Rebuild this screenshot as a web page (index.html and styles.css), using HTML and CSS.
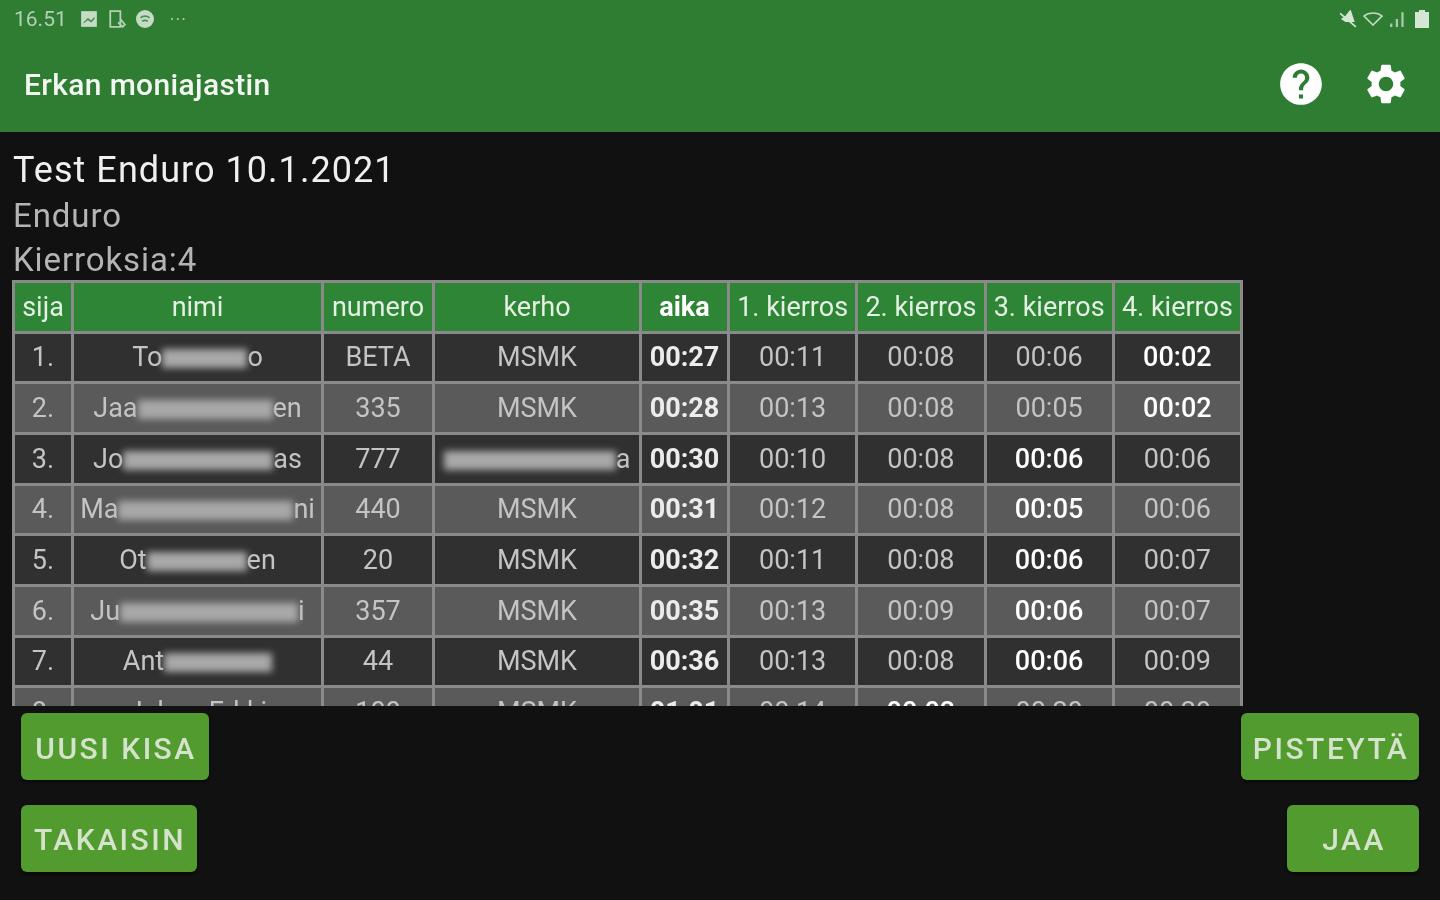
FILE: index.html
```html
<!DOCTYPE html>
<html lang="en">
  <head>
    <meta charset="UTF-8">
    <meta name="viewport" content="width=device-width, initial-scale=1.0">
    <title>Erkan moniajastin</title>
    <link rel="stylesheet" href="styles.css">
  </head>
  <body>
    <div class="screen">
      <header class="topbar">
        <div class="statusbar">
          <div class="status-left">
            <span class="clock">16.51</span>
            <svg class="status-icon" viewBox="0 0 16 16"><path d="M1 1h14v14H1z" fill="#c3dcc3"/><path d="M3 11l4-4 3 2 3-3v2l-3 3-3-2-4 3z" fill="#4f8f52"/></svg>
            <svg class="status-icon" viewBox="0 0 16 16"><path d="M2 1h9v14H2zM11 8l4 5-2 2-4-4" fill="none" stroke="#b5d1b5" stroke-width="1.6"/></svg>
            <svg class="status-icon" viewBox="0 0 16 16"><circle cx="8" cy="8" r="8" fill="#c3dcc3"/><path d="M4 7c2-2 6-2 8 0M5.500 10c1.500-1 3.500-1 5 0" fill="none" stroke="#4f8f52" stroke-width="1.500"/></svg>
            <span class="more">&middot;&middot;&middot;</span>
          </div>
          <div class="status-right">
            <svg class="status-icon" viewBox="0 0 16 16"><path d="M1 3l14 12M3 8l3-2 4-5 3 9H6z" fill="#d5e6d5" stroke="#d5e6d5" stroke-width="1.500"/></svg>
            <svg class="status-wifi" viewBox="0 0 20 14"><path d="M1 4c5-4 13-4 18 0l-9 9z" fill="none" stroke="#c3dcc3" stroke-width="1.600"/></svg>
            <svg class="status-icon" viewBox="0 0 16 16"><path d="M1 15h2v-3H1zM6 15h2V8H6zM11 15h2V2h-2z" fill="#a9cba9"/></svg>
            <svg class="status-battery" viewBox="0 0 14 18"><path d="M4 0h6v2h4v16H0V2h4z" fill="#d5e6d5"/></svg>
          </div>
        </div>
        <div class="appbar">
          <h1 class="app-title">Erkan moniajastin</h1>
          <div class="app-actions">
            <svg class="icon-help" viewBox="0 0 24 24"><path fill="#fff" d="M12 2C6.48 2 2 6.48 2 12s4.48 10 10 10 10-4.48 10-10S17.52 2 12 2zm1 17h-2v-2h2v2zm2.070-7.750l-.9.920C13.450 12.900 13 13.500 13 15h-2v-.5c0-1.100.45-2.100 1.170-2.830l1.240-1.260c.37-.36.59-.86.59-1.410 0-1.100-.9-2-2-2s-2 .9-2 2H8c0-2.210 1.790-4 4-4s4 1.790 4 4c0 .88-.36 1.680-.93 2.250z"/></svg>
            <svg class="icon-gear" viewBox="0 0 24 24"><path fill="#fff" d="M19.140 12.940c.04-.3.06-.61.06-.94 0-.32-.02-.64-.07-.94l2.030-1.580c.18-.14.23-.41.12-.61l-1.920-3.320c-.12-.22-.37-.29-.59-.22l-2.390.96c-.5-.38-1.030-.7-1.620-.94l-.36-2.540c-.04-.24-.24-.41-.48-.41h-3.840c-.24 0-.43.17-.47.41l-.36 2.540c-.59.24-1.130.57-1.620.94l-2.390-.96c-.22-.08-.47 0-.59.22L2.740 8.870c-.12.21-.08.47.12.61l2.030 1.580c-.05.3-.09.63-.09.94s.02.64.07.94l-2.030 1.580c-.18.14-.23.41-.12.61l1.920 3.320c.12.22.37.29.59.22l2.390-.96c.5.38 1.030.7 1.620.94l.36 2.540c.05.24.24.41.48.41h3.840c.24 0 .44-.17.47-.41l.36-2.540c.59-.24 1.130-.56 1.620-.94l2.390.96c.22.08.47 0 .59-.22l1.920-3.320c.12-.22.07-.47-.12-.61l-2.010-1.580zM12 15.600c-1.980 0-3.600-1.620-3.600-3.600s1.620-3.600 3.600-3.600 3.600 1.620 3.600 3.600-1.620 3.600-3.600 3.600z"/></svg>
          </div>
        </div>
      </header>

      <main class="content">
        <h2 class="race-name">Test Enduro 10.1.2021</h2>
        <p class="race-info">Enduro</p>
        <p class="race-info">Kierroksia:4</p>

        <div class="table-wrap">
          <table class="results">
            <colgroup>
              <col class="col-sija"><col class="col-nimi"><col class="col-numero"><col class="col-kerho"><col class="col-aika">
              <col class="col-lap"><col class="col-lap"><col class="col-lap"><col class="col-lap">
            </colgroup>
            <thead>
              <tr>
                <th>sija</th><th>nimi</th><th>numero</th><th>kerho</th><th class="best">aika</th>
                <th>1. kierros</th><th>2. kierros</th><th>3. kierros</th><th>4. kierros</th>
              </tr>
            </thead>
            <tbody>
              <tr>
                <td>1.</td><td>To<span class="smudge w85"></span>o</td><td>BETA</td><td>MSMK</td><td class="total">00:27</td>
                <td>00:11</td><td>00:08</td><td>00:06</td><td class="best">00:02</td>
              </tr>
              <tr>
                <td>2.</td><td>Jaa<span class="smudge w135"></span>en</td><td>335</td><td>MSMK</td><td class="total">00:28</td>
                <td>00:13</td><td>00:08</td><td>00:05</td><td class="best">00:02</td>
              </tr>
              <tr>
                <td>3.</td><td>Jo<span class="smudge w150"></span>as</td><td>777</td><td><span class="smudge w172"></span>a</td><td class="total">00:30</td>
                <td>00:10</td><td>00:08</td><td class="best">00:06</td><td>00:06</td>
              </tr>
              <tr>
                <td>4.</td><td>Ma<span class="smudge w175"></span>ni</td><td>440</td><td>MSMK</td><td class="total">00:31</td>
                <td>00:12</td><td>00:08</td><td class="best">00:05</td><td>00:06</td>
              </tr>
              <tr>
                <td>5.</td><td>Ot<span class="smudge w100"></span>en</td><td>20</td><td>MSMK</td><td class="total">00:32</td>
                <td>00:11</td><td>00:08</td><td class="best">00:06</td><td>00:07</td>
              </tr>
              <tr>
                <td>6.</td><td>Ju<span class="smudge w178"></span>i</td><td>357</td><td>MSMK</td><td class="total">00:35</td>
                <td>00:13</td><td>00:09</td><td class="best">00:06</td><td>00:07</td>
              </tr>
              <tr>
                <td>7.</td><td>Ant<span class="smudge w108"></span></td><td>44</td><td>MSMK</td><td class="total">00:36</td>
                <td>00:13</td><td>00:08</td><td class="best">00:06</td><td>00:09</td>
              </tr>
              <tr>
                <td>8.</td><td>Juhan Erkki</td><td>100</td><td>MSMK</td><td class="total">01:01</td>
                <td>00:14</td><td class="best">00:02</td><td>00:20</td><td>00:20</td>
              </tr>
            </tbody>
          </table>
        </div>

        <div class="button-row">
          <button class="btn btn-new">UUSI KISA</button>
          <button class="btn btn-score">PISTEYTÄ</button>
        </div>
        <div class="button-row second">
          <button class="btn btn-back">TAKAISIN</button>
          <button class="btn btn-share">JAA</button>
        </div>
      </main>
    </div>
  </body>
</html>
```

FILE: styles.css
```css
html, body {
  margin: 0;
  background-color: #111111;
}
body {
  font-family: Roboto, "Liberation Sans", sans-serif;
  overflow: hidden;
}
.screen {
  width: 1440px;
  height: 900px;
  overflow: hidden;
  filter: blur(0.7px);
}

/* top green part */
.topbar {
  height: 132px;
  background-color: #2e7d32;
  box-sizing: border-box;
}
.statusbar {
  height: 38px;
  display: flex;
  justify-content: space-between;
  align-items: center;
  padding: 0 11px 0 14px;
}
.status-left, .status-right {
  display: flex;
  align-items: center;
}
.status-left {
  gap: 10px;
}
.status-right {
  gap: 6px;
}
.clock {
  font-size: 21px;
  color: #b5d1b5;
  margin-right: 3px;
}
.more {
  font-size: 18px;
  color: #a9cba9;
  margin-left: 6px;
  letter-spacing: 1px;
}
.status-icon {
  width: 18px;
  height: 18px;
}
.status-wifi {
  width: 20px;
  height: 14px;
}
.status-battery {
  width: 14px;
  height: 18px;
  margin-left: 2px;
}
.appbar {
  height: 94px;
  display: flex;
  justify-content: space-between;
  align-items: center;
  padding: 0 30px 0 24px;
}
.app-title {
  margin: 0 0 2px 0;
  font-size: 30px;
  font-weight: 500;
  letter-spacing: 0.35px;
  color: #f2f7f2;
}
.app-actions {
  display: flex;
  align-items: center;
  gap: 36px;
  margin-bottom: 2px;
}
.icon-help {
  width: 50px;
  height: 50px;
}
.icon-gear {
  width: 48px;
  height: 48px;
}

/* race info */
.content {
  padding: 15px 0 0 13px;
}
.race-name {
  margin: 0;
  font-size: 36px;
  line-height: 47px;
  font-weight: 400;
  letter-spacing: 1.05px;
  color: #f0f0f0;
}
.race-info {
  margin: 0;
  font-size: 33px;
  line-height: 44px;
  letter-spacing: 0.9px;
  color: #b4b4b4;
}

/* table */
.table-wrap {
  width: 1231px;
  height: 426px;
  margin-left: -1px;
  margin-top: -2px;
  overflow: hidden;
}
.results {
  border-collapse: collapse;
  table-layout: fixed;
  width: 1228px;
  font-size: 27px;
  color: #c4c4c4;
}
.col-sija { width: 59px; }
.col-nimi { width: 250px; }
.col-numero { width: 111px; }
.col-kerho { width: 207px; }
.col-aika { width: 88px; }
.col-lap { width: 128.250px; }
.results th, .results td {
  border: 3px solid #8a8a8a;
  padding: 0;
  height: 50.670px;
  box-sizing: border-box;
  text-align: center;
  white-space: nowrap;
  overflow: hidden;
}
.results th {
  background-color: #2e8535;
  font-weight: 400;
  color: #e4f0e4;
}
.results th.best {
  font-weight: 700;
  color: #ffffff;
}
.results tbody tr:nth-child(odd) td {
  background-color: #303030;
}
.results tbody tr:nth-child(even) td {
  background-color: #5a5a5a;
}
.results td.total {
  font-weight: 700;
  color: #ececec;
}
.results td.best {
  font-weight: 500;
  color: #ffffff;
}

/* blurred out names */
.smudge {
  display: inline-block;
  height: 19px;
  vertical-align: -2px;
  background-color: #a8a8a8;
  filter: blur(3.500px);
}
.w85 { width: 85px; }
.w100 { width: 100px; }
.w108 { width: 108px; }
.w135 { width: 135px; }
.w150 { width: 150px; }
.w172 { width: 172px; }
.w175 { width: 175px; }
.w178 { width: 178px; }

/* buttons */
.button-row {
  display: flex;
  justify-content: space-between;
  padding: 7px 21px 0 8px;
}
.button-row.second {
  padding-top: 25px;
}
.btn {
  height: 67px;
  border: none;
  border-radius: 6px;
  background-color: #529b2e;
  color: #d5e2cc;
  font-family: Roboto, "Liberation Sans", sans-serif;
  font-size: 30px;
  font-weight: 500;
  letter-spacing: 2.500px;
  padding: 3px 0 0 2px;
  box-shadow: 0 2px 3px rgba(0, 0, 0, 0.6);
}
.btn-back, .btn-share {
  padding-top: 1px;
}
.btn-new { width: 188px; }
.btn-score { width: 178px; }
.btn-back { width: 176px; }
.btn-share { width: 132px; }
```
